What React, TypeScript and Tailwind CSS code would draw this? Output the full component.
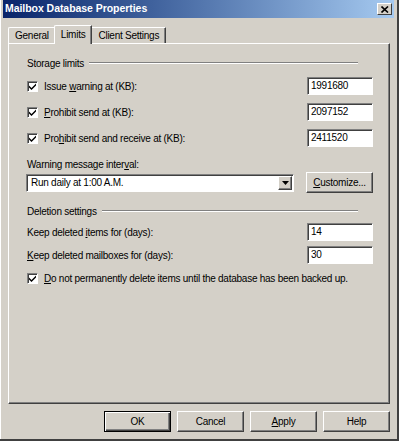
import React from "react";

const font = { fontFamily: '"Liberation Sans", Arial, sans-serif' };

function U({ children }: { children: React.ReactNode }) {
  return <span className="underline underline-offset-1">{children}</span>;
}

function Check() {
  return (
    <div className="w-[11px] h-[11px] shrink-0 bg-white border-t border-l border-t-[#808080] border-l-[#808080] border-b border-r border-b-white border-r-white shadow-[inset_1px_1px_0_#404040] flex items-center justify-center">
      <svg width="7" height="7" viewBox="0 0 7 7">
        <path d="M0 2.5 L2.5 5 L7 0.5 L7 2.5 L2.5 7 L0 4.5 Z" fill="#000" />
      </svg>
    </div>
  );
}

function Field({ value }: { value: string }) {
  return (
    <div className="w-[66px] h-[18px] bg-white border-t border-l border-t-[#808080] border-l-[#808080] border-b border-r border-b-white border-r-white shadow-[inset_1px_1px_0_#404040] pl-[3px] leading-[16px] text-black">
      {value}
    </div>
  );
}

function Button({ children, w = "w-[67px]", def = false }: { children: React.ReactNode; w?: string; def?: boolean }) {
  return (
    <div
      className={`${w} h-[21px] flex items-center justify-center text-black ${
        def
          ? "border border-black shadow-[inset_1px_1px_0_#fff,inset_-1px_-1px_0_#404040,inset_-2px_-2px_0_#808080]"
          : "border-t border-l border-t-white border-l-white border-b border-r border-b-[#404040] border-r-[#404040] shadow-[inset_-1px_-1px_0_#808080]"
      }`}
    >
      {children}
    </div>
  );
}

function GroupHeader({ label }: { label: string }) {
  return (
    <div className="flex items-center h-[14px] pl-[1px] pr-[15px]">
      <span className="text-black pr-[5px] whitespace-nowrap">{label}</span>
      <div className="flex-1 border-t border-t-[#808080] border-b border-b-white" />
    </div>
  );
}

function CheckRow({ label, value }: { label: React.ReactNode; value: string }) {
  return (
    <div className="flex items-center h-[18px] pl-[1px]">
      <Check />
      <span className="ml-[6px] text-black flex-1 whitespace-nowrap">{label}</span>
      <Field value={value} />
    </div>
  );
}

export default function App() {
  return (
    <div style={font} className="w-[399px] h-[441px] bg-[#d4d0c8] flex flex-col px-[3px] text-[10px] tracking-[-0.25px] border-b-[2px] border-b-[#404040] border-r-[2px] border-r-[#404040] shadow-[inset_1px_0_0_#fff]">
      <div className="h-[18px] bg-gradient-to-r from-[#0a246a] to-[#a6caf0] flex items-center justify-between pl-[2px] pr-[2px]">
        <span className="text-white font-bold text-[10.5px] tracking-[-0.05px]">Mailbox Database Properties</span>
        <div className="w-[15px] h-[12px] bg-[#d4d0c8] border-t border-l border-t-white border-l-white border-b border-r border-b-[#404040] border-r-[#404040] flex items-center justify-center">
          <svg width="8" height="7" viewBox="0 0 8 7">
            <path d="M0.5 0.5 L7 6.5 M7 0.5 L0.5 6.5" stroke="#000" strokeWidth="1.6" />
          </svg>
        </div>
      </div>

      <div className="flex items-end h-[25px] pl-[5px] text-black">
        <div className="h-[16px] px-[6px] flex items-center border-t border-l border-t-white border-l-white border-r border-r-[#404040] rounded-tl-[2px]">
          General
        </div>
        <div className="h-[19px] px-[6px] flex items-start pt-[1px] border-t border-l border-t-white border-l-white border-r border-r-[#404040] shadow-[inset_-1px_0_0_#808080] rounded-tl-[2px] bg-[#d4d0c8] relative -mb-px z-10 -ml-[2px]">
          Limits
        </div>
        <div className="h-[16px] px-[6px] flex items-center border-t border-t-white border-r border-r-[#404040] shadow-[inset_-1px_0_0_#808080]">
          Client Settings
        </div>
      </div>

      <div className="ml-[5px] mr-[4px] h-[361px] border-t border-l border-t-white border-l-white border-b border-r border-b-[#404040] border-r-[#404040] shadow-[inset_-1px_-1px_0_#808080] pl-[17px] pr-[16px] flex flex-col">
        <div className="mt-[12px]">
          <GroupHeader label="Storage limits" />
        </div>
        <div className="mt-[7px] flex flex-col gap-[8px]">
          <CheckRow label={<>Issue <U>w</U>arning at (KB):</>} value="1991680" />
          <CheckRow label={<><U>P</U>rohibit send at (KB):</>} value="2097152" />
          <CheckRow label={<>Pro<U>h</U>ibit send and receive at (KB):</>} value="2411520" />
        </div>
        <div className="mt-[10px] h-[14px] pl-[1px] text-black flex items-center">
          Warning message inter<U>v</U>al:
        </div>
        <div className="mt-[1px] flex items-center justify-between h-[21px]">
          <div className="w-[268px] h-[18px] bg-white border-t border-l border-t-[#808080] border-l-[#808080] border-b border-r border-b-white border-r-white shadow-[inset_1px_1px_0_#404040] flex items-center">
            <span className="flex-1 pl-[4px] text-black">Run daily at 1:00 A.M.</span>
            <div className="w-[14px] h-[14px] mr-[1px] bg-[#d4d0c8] border-t border-l border-t-white border-l-white border-b border-r border-b-[#404040] border-r-[#404040] shadow-[inset_-1px_-1px_0_#808080] flex items-center justify-center">
              <svg width="7" height="4" viewBox="0 0 7 4">
                <path d="M0 0 H7 L3.5 4 Z" fill="#000" />
              </svg>
            </div>
          </div>
          <Button w="w-[67px]"><span><U>C</U>ustomize...</span></Button>
        </div>
        <div className="mt-[11px]">
          <GroupHeader label="Deletion settings" />
        </div>
        <div className="mt-[5px] flex flex-col gap-[5px]">
          <div className="flex items-center h-[18px] pl-[1px] text-black">
            <span className="flex-1">Keep deleted <U>i</U>tems for (days):</span>
            <Field value="14" />
          </div>
          <div className="flex items-center h-[18px] pl-[1px] text-black">
            <span className="flex-1"><U>K</U>eep deleted mailboxes for (days):</span>
            <Field value="30" />
          </div>
        </div>
        <div className="mt-[7px] flex items-center h-[14px] pl-[1px]">
          <Check />
          <span className="ml-[6px] text-black whitespace-nowrap">
            <U>D</U>o not permanently delete items until the database has been backed up.
          </span>
        </div>
      </div>

      <div className="mt-[7px] flex justify-end gap-[6px] pr-[4px]">
        <Button def>OK</Button>
        <Button>Cancel</Button>
        <Button><span><U>A</U>pply</span></Button>
        <Button>Help</Button>
      </div>
    </div>
  );
}
